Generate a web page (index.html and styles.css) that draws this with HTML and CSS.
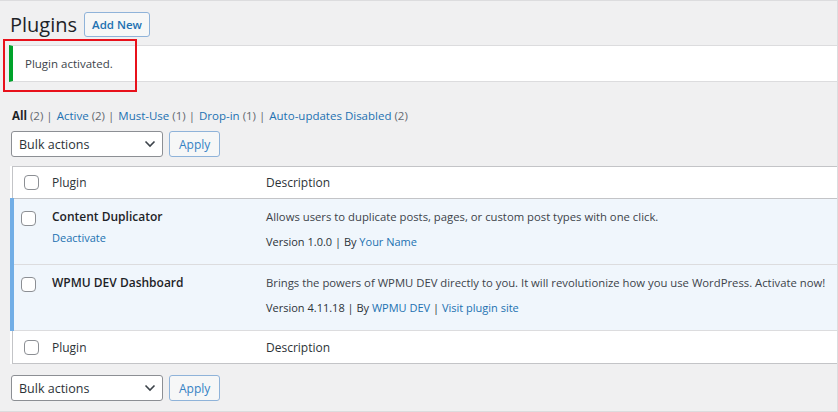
FILE: index.html
```html
<!DOCTYPE html>
<html lang="en">
<head>
  <meta charset="UTF-8" />
  <title>Plugins</title>
  <link rel="stylesheet" href="styles.css">
</head>
<body>
  <div class="wrap">
    <div class="page-head">
      <h1>Plugins</h1>
      <a href="#" class="btn">Add New</a>
    </div>

    <div class="notice">
      <p>Plugin activated.</p>
    </div>
    <div class="highlight"></div>

    <ul class="subsubsub">
      <li><b>All</b> <span class="count">(2)</span> |</li>
      <li><a href="#">Active</a> <span class="count">(2)</span> |</li>
      <li><a href="#">Must-Use</a> <span class="count">(1)</span> |</li>
      <li><a href="#">Drop-in</a> <span class="count">(1)</span> |</li>
      <li><a href="#">Auto-updates Disabled</a> <span class="count">(2)</span></li>
    </ul>

    <div class="tablenav">
      <div class="select">Bulk actions
        <svg width="12" height="8" viewBox="0 0 12 8"><path d="M1.5 1.5 6 6l4.5-4.5" fill="none" stroke="#3c434a" stroke-width="1.6"/></svg>
      </div>
      <a href="#" class="btn">Apply</a>
    </div>

    <table class="plugins">
      <thead>
        <tr>
          <td class="cb"><span class="check"></span></td>
          <th class="name">Plugin</th>
          <th>Description</th>
        </tr>
      </thead>
      <tbody>
        <tr class="active">
          <td class="cb"><span class="check"></span></td>
          <td class="name">
            <strong>Content Duplicator</strong>
            <a href="#" class="action">Deactivate</a>
          </td>
          <td class="desc">
            <p>Allows users to duplicate posts, pages, or custom post types with one click.</p>
            <p class="meta">Version 1.0.0 | By <a href="#">Your Name</a></p>
          </td>
        </tr>
        <tr class="active">
          <td class="cb"><span class="check"></span></td>
          <td class="name">
            <strong>WPMU DEV Dashboard</strong>
          </td>
          <td class="desc">
            <p>Brings the powers of WPMU DEV directly to you. It will revolutionize how you use WordPress. Activate now!</p>
            <p class="meta">Version 4.11.18 | By <a href="#">WPMU DEV</a> | <a href="#">Visit plugin site</a></p>
          </td>
        </tr>
      </tbody>
      <tfoot>
        <tr>
          <td class="cb"><span class="check"></span></td>
          <th class="name">Plugin</th>
          <th>Description</th>
        </tr>
      </tfoot>
    </table>

    <div class="tablenav bottom">
      <div class="select">Bulk actions
        <svg width="12" height="8" viewBox="0 0 12 8"><path d="M1.5 1.5 6 6l4.5-4.5" fill="none" stroke="#3c434a" stroke-width="1.6"/></svg>
      </div>
      <a href="#" class="btn">Apply</a>
    </div>
  </div>
</body>
</html>
```

FILE: styles.css
```css
* {
  margin: 0;
  padding: 0;
  box-sizing: border-box;
}

body {
  font-family: 'Open Sans', sans-serif;
  font-size: 12px;
  color: #3c434a;
  background: #fff;
}

a {
  color: #2271b1;
  text-decoration: none;
}

.wrap {
  position: relative;
  width: 838px;
  height: 412px;
  background: #f0f0f1;
  border: 1px solid #dcdcde;
  border-left: none;
  padding: 11px 0 0 9px;
  overflow: hidden;
}

.page-head {
  display: flex;
  align-items: center;
  gap: 7px;
  padding-left: 1px;
  height: 25px;
}

h1 {
  font-size: 20px;
  font-weight: 400;
  color: #1d2327;
  line-height: 25px;
}

.btn {
  display: inline-flex;
  align-items: center;
  height: 25px;
  padding: 0 7px;
  border: 1px solid #8fb3d9;
  border-radius: 3px;
  background: #f6f7f7;
  font-size: 11.5px;
  font-weight: 600;
  color: #2271b1;
}

.notice {
  margin-top: 8px;
  height: 37px;
  background: #fff;
  border: 1px solid #dcdcde;
  border-left: 4px solid #00a32a;
  border-right: none;
  display: flex;
  align-items: center;
  padding-left: 12px;
}

.notice p {
  font-size: 11.5px;
}

.highlight {
  position: absolute;
  left: 3px;
  top: 38px;
  width: 134px;
  height: 53px;
  border: 2px solid #e8111b;
}

.subsubsub {
  list-style: none;
  display: flex;
  gap: 4px;
  margin: 26px 0 0 3px;
  font-size: 11.5px;
  color: #646970;
}

.subsubsub b {
  color: #1d2327;
}

.tablenav {
  display: flex;
  gap: 6px;
  margin: 8px 0 9px 2px;
  height: 26px;
}

.tablenav.bottom {
  margin-top: 11px;
}

.tablenav .btn {
  font-weight: 400;
  font-size: 12px;
  height: 26px;
  padding: 0 9px;
  color: #3582c4;
}

.select {
  width: 152px;
  height: 26px;
  display: flex;
  align-items: center;
  justify-content: space-between;
  padding: 0 6px 0 7px;
  background: #fff;
  border: 1px solid #8c8f94;
  border-radius: 3px;
  font-size: 12.5px;
  color: #2c3338;
}

.plugins {
  width: 828px;
  border-collapse: collapse;
  background: #fff;
  border: 1px solid #c3c4c7;
  border-right: none;
  margin-left: 1px;
}

.plugins th,
.plugins td {
  text-align: left;
  font-weight: 400;
  vertical-align: top;
}

.plugins thead tr,
.plugins tfoot tr {
  height: 32px;
}

.plugins thead th,
.plugins tfoot th {
  vertical-align: middle;
  font-size: 12px;
  color: #2c3338;
}

.plugins thead tr {
  border-bottom: 1px solid #c3c4c7;
}

.plugins tfoot tr {
  height: 33px;
  border-top: 1px solid #dcdcde;
}

.plugins .cb {
  width: 40px;
  padding: 0 0 0 11px;
  vertical-align: middle;
}

.check {
  display: block;
  width: 15px;
  height: 15px;
  border: 1px solid #8c8f94;
  border-radius: 4px;
  background: #fff;
}

.plugins .name {
  width: 214px;
}

.plugins tbody tr {
  height: 66px;
  background: #f0f6fc;
  border-bottom: 1px solid #dcdcde;
}

.plugins tbody td {
  padding-top: 10px;
}

.plugins tbody .cb {
  vertical-align: top;
  padding-top: 12px;
}

.plugins tbody tr.active .cb {
  border-left: 4px solid #72aee6;
  padding-left: 7px;
}

.plugins .name strong {
  display: block;
  font-size: 12px;
  font-weight: 600;
  color: #1d2327;
  line-height: 16px;
}

.plugins .action {
  display: block;
  margin-top: 5px;
  font-size: 11px;
  line-height: 15px;
}

.desc p {
  font-size: 11.3px;
  line-height: 16px;
  white-space: nowrap;
}

.desc .meta {
  margin-top: 9px;
  font-size: 11px;
  color: #2c3338;
}
```
